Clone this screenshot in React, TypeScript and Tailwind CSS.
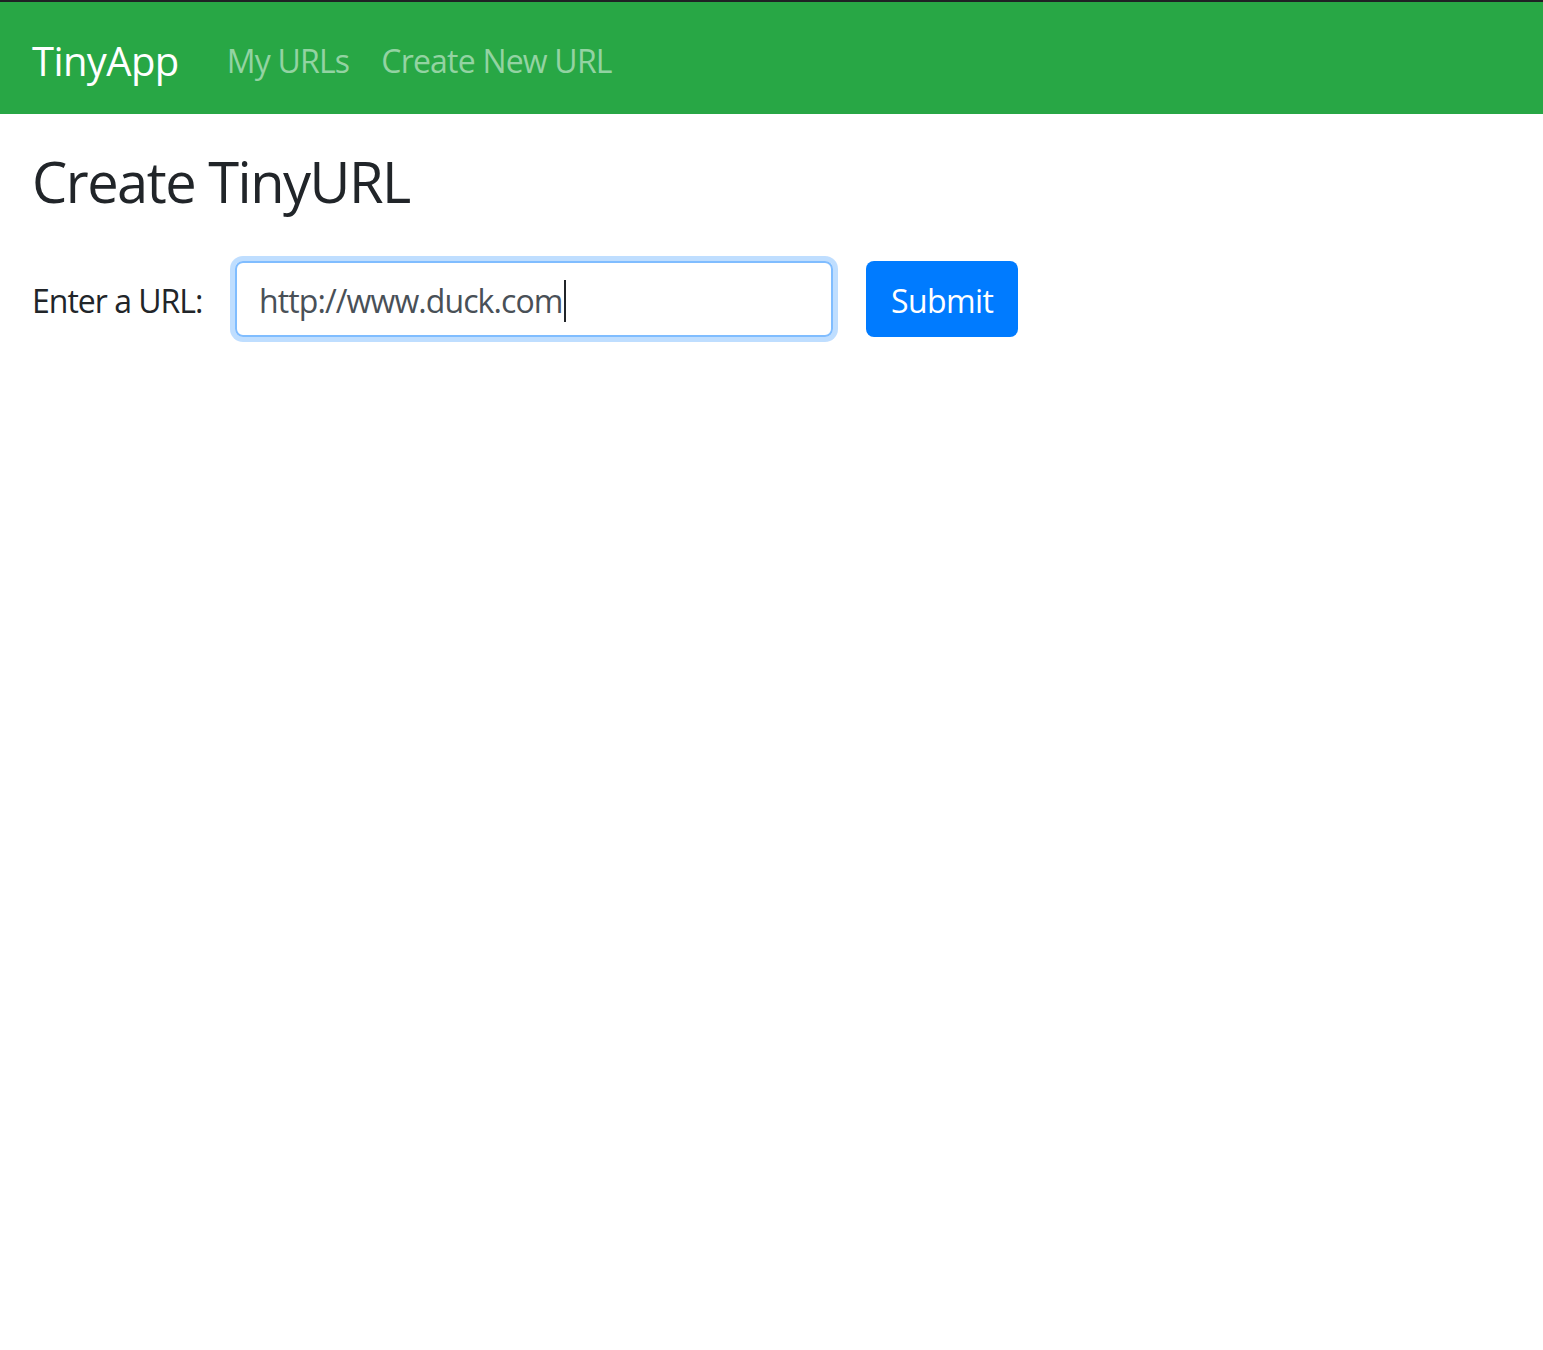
export default function App() {
  const font = { fontFamily: '"Open Sans", "Noto Sans", sans-serif' };
  return (
    <div className="min-h-screen bg-white" style={font}>
      {/* window top edge */}
      <div className="h-[2px] bg-[#1f2124]" />

      {/* navbar */}
      <nav className="flex h-[112px] items-center bg-[#28a745] px-8 pt-[5px]">
        <a className="mr-8 text-[40px] leading-none tracking-[-0.6px] text-white">TinyApp</a>
        <div className="flex">
          <a className="px-4 text-[32px] leading-none tracking-[-0.8px] text-[#93d3a2]">My URLs</a>
          <a className="px-4 text-[32px] leading-none tracking-[-0.8px] text-[#93d3a2]">Create New URL</a>
        </div>
      </nav>

      <main className="px-8">
        <h3 className="mt-[34px] text-[56px] leading-[1.2] tracking-[-1.5px] text-[#212529]">Create TinyURL</h3>

        <form className="mt-[46px] flex items-center">
          <label className="w-[203px] pt-[4px] text-[32px] tracking-[-1px] text-[#212529]">Enter a URL:</label>
          <div className="flex h-[76px] w-[598px] items-center rounded-[8px] border-2 border-[#80bdff] px-[22px] pt-[4px] shadow-[0_0_0_5px_rgba(0,123,255,0.25)]">
            <span className="text-[32px] tracking-[-0.9px] text-[#495057]">http://www.duck.com</span>
            <span className="ml-[1px] h-[42px] w-[2px] bg-[#212529]" />
          </div>
          <button
            type="button"
            className="ml-[33px] h-[76px] rounded-[8px] bg-[#007bff] px-[25px] pt-[4px] text-[32px] tracking-[-0.6px] text-white"
          >
            Submit
          </button>
        </form>
      </main>
    </div>
  );
}
